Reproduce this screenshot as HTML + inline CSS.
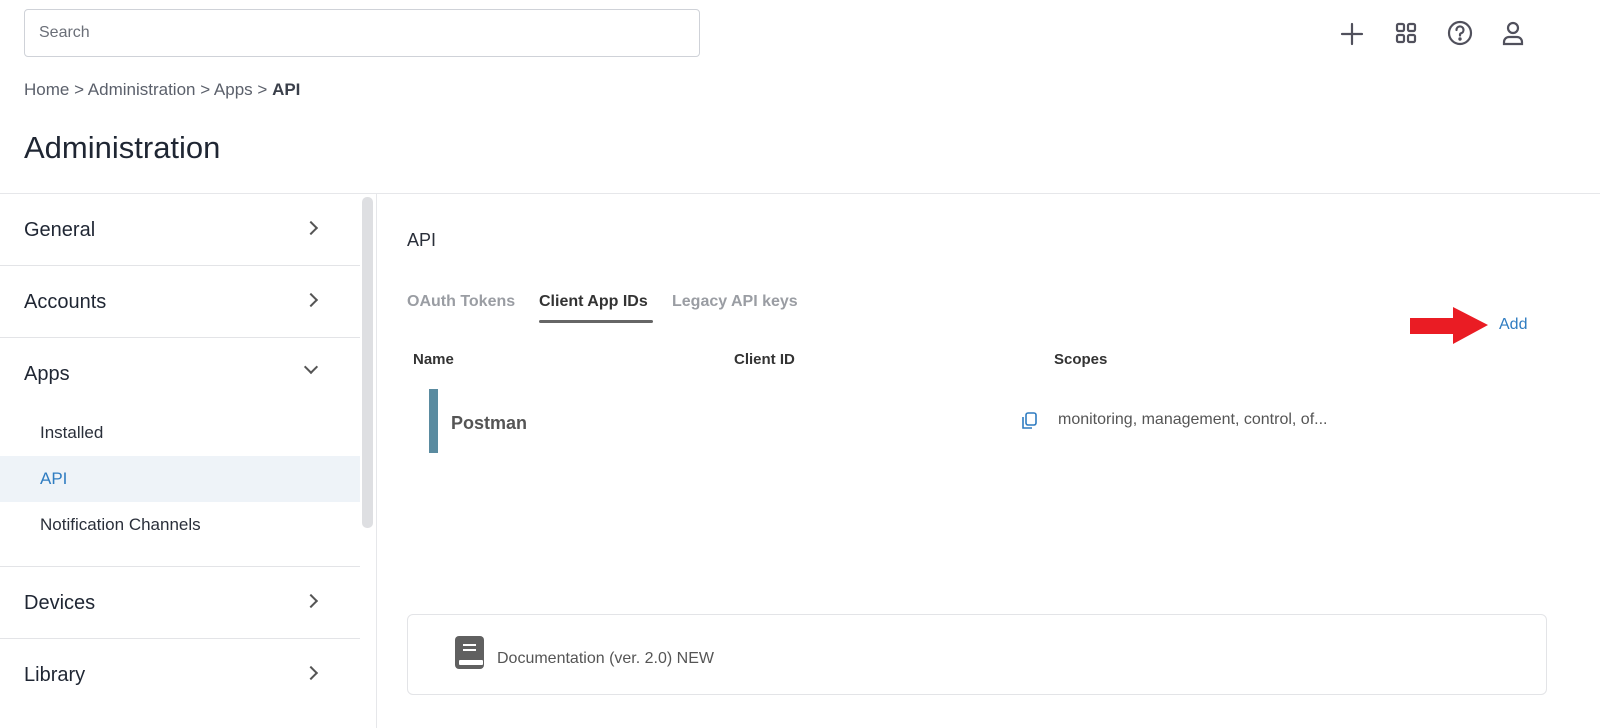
<!DOCTYPE html>
<html><head><style>
*{box-sizing:border-box;margin:0;padding:0}
body{width:1600px;height:728px;overflow:hidden;background:#fff;font-family:"Liberation Sans",sans-serif;color:#1f2633;position:relative}
.a{position:absolute}
.search{left:24px;top:9px;width:676px;height:48px;border:1px solid #cfd2d8;border-radius:4px;padding:0 14px;line-height:46px;color:#6b6f78;font-size:16px}
.crumb{left:24px;top:80px;font-size:17px;color:#5b606b}
.crumb b{color:#3a3f4a}
h1{position:absolute;left:24px;top:130px;font-size:31px;font-weight:normal;color:#1f2633}
.hline{left:0;top:193px;width:1600px;height:1px;background:#e6e7ea}
.side{left:0;top:194px;width:360px}
.item{height:72px;border-bottom:1px solid #e3e4e7;font-size:20px;line-height:72px;padding-left:24px;position:relative}
.chev{position:absolute;right:44px;top:29px;width:10px;height:10px;border-right:2px solid #555;border-top:2px solid #555;transform:rotate(45deg)}
.sub{font-size:17px;padding-left:40px;height:46px;line-height:46px;color:#2a2f3a}
</style></head><body>
<div class="a search">Search</div>
<svg class="a" style="left:1340px;top:20px" width="200" height="30" viewBox="0 0 200 30" fill="none" stroke="#50505c" stroke-width="2.2" stroke-linecap="round">
<path d="M12 4v20M2 14h20"/>
<rect x="57" y="4" width="7" height="7" rx="1.5"/><rect x="68" y="4" width="7" height="7" rx="1.5"/><rect x="57" y="15" width="7" height="7" rx="1.5"/><rect x="68" y="15" width="7" height="7" rx="1.5"/>
<circle cx="120" cy="13" r="11"/><path d="M116.5 10a3.5 3.5 0 1 1 4.5 3.3c-.7.3-1 .8-1 1.5v.7"/><circle cx="120" cy="19" r=".6" fill="#50505c"/>
<circle cx="173" cy="8" r="5"/><path d="M164 24v-2a5 5 0 0 1 5-5h8a5 5 0 0 1 5 5v2z"/>
</svg>
<div class="a crumb">Home &gt; Administration &gt; Apps &gt; <b>API</b></div>
<h1>Administration</h1>
<div class="a hline"></div>
<div class="a side">
<div class="item">General<span class="chev"></span></div>
<div class="item">Accounts<span class="chev"></span></div>
<div style="border-bottom:1px solid #e3e4e7;padding-bottom:18px">
<div class="item" style="border:none">Apps<span class="chev" style="transform:rotate(135deg);top:24px"></span></div>
<div class="sub">Installed</div>
<div class="sub" style="background:#eef3f8;color:#2f7cc1">API</div>
<div class="sub">Notification Channels</div>
</div>
<div class="item">Devices<span class="chev"></span></div>
<div class="item" style="border:none">Library<span class="chev"></span></div>
</div>
<div class="a" style="left:362px;top:197px;width:11px;height:331px;background:#dedfe2;border-radius:5px"></div>
<div class="a" style="left:376px;top:194px;width:1px;height:534px;background:#e6e7ea"></div>
<div class="a" style="left:407px;top:230px;font-size:18px;color:#2a2f3a">API</div>
<div class="a" style="left:407px;top:293px;font-size:16px;font-weight:bold;color:#9a9da3">OAuth Tokens</div>
<div class="a" style="left:539px;top:293px;font-size:16px;font-weight:bold;color:#333">Client App IDs</div>
<div class="a" style="left:539px;top:320px;width:114px;height:3px;background:#666;border-radius:2px"></div>
<div class="a" style="left:672px;top:293px;font-size:16px;font-weight:bold;color:#9a9da3">Legacy API keys</div>
<svg class="a" style="left:1410px;top:307px" width="80" height="38"><path d="M0 11h43V0l35 18-35 19V27H0z" fill="#ea1c24"/></svg>
<div class="a" style="left:1499px;top:316px;font-size:16px;color:#2f7cc1">Add</div>
<div class="a" style="left:413px;top:351px;font-size:15px;font-weight:bold;color:#333">Name</div>
<div class="a" style="left:734px;top:351px;font-size:15px;font-weight:bold;color:#333">Client ID</div>
<div class="a" style="left:1054px;top:351px;font-size:15px;font-weight:bold;color:#333">Scopes</div>
<div class="a" style="left:429px;top:389px;width:9px;height:64px;background:#5a8ba0"></div>
<div class="a" style="left:451px;top:413px;font-size:18px;font-weight:bold;color:#555">Postman</div>
<svg class="a" style="left:1019px;top:411px" width="20" height="20" fill="none" stroke="#2f7cc1" stroke-width="1.6"><rect x="7" y="2" width="10" height="12" rx="2"/><path d="M4 6v11h9"/></svg>
<div class="a" style="left:1058px;top:411px;font-size:16px;color:#555">monitoring, management, control, of...</div>
<div class="a" style="left:407px;top:614px;width:1140px;height:81px;border:1px solid #e3e4e7;border-radius:6px"></div>
<svg class="a" style="left:455px;top:636px" width="30" height="34"><rect x="0" y="0" width="29" height="33" rx="4" fill="#606060"/><path d="M8 9h13M8 14h13" stroke="#fff" stroke-width="2"/><rect x="4" y="24" width="24" height="5" rx="1" fill="#fff"/></svg>
<div class="a" style="left:497px;top:650px;font-size:16px;color:#555">Documentation (ver. 2.0) NEW</div>
</body></html>
